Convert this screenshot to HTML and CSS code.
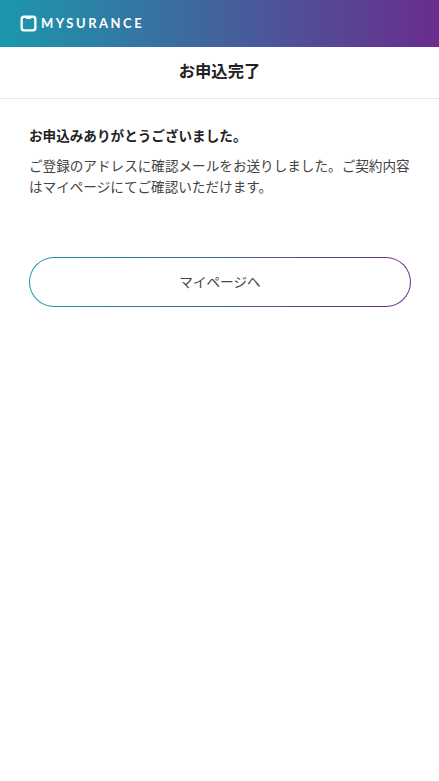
FILE: index.html
```html
<!DOCTYPE html>
<html lang="ja">
<head>
<meta charset="utf-8">
<title>お申込完了</title>
<link rel="stylesheet" href="styles.css">
</head>
<body>
<header class="topbar">
  <svg class="logo-mark" width="17" height="17" viewBox="0 0 17 17" aria-hidden="true">
    <path fill="#fff" fill-rule="evenodd" d="M4 0.5h9a3.5 3.5 0 0 1 3.5 3.5v9a3.500 3.500 0 0 1-3.500 3.500H4A3.500 3.500 0 0 1 0.500 13V4A3.500 3.500 0 0 1 4 0.500ZM4.500 2.800C3.500 2.800 2.800 3.500 2.800 4.500v8c0 1 .7 1.700 1.700 1.700h8c1 0 1.700-.7 1.700-1.700v-8c0-1-.7-1.700-1.700-1.700-.7 0-1 .3-1.400.6-.7.5-1.600.7-2.600.7s-1.900-.2-2.600-.7C5.500 3.100 5.200 2.800 4.500 2.800Z"/>
  </svg>
  <span class="logo-text">MYSURANCE</span>
</header>
<h1 class="page-title">お申込完了</h1>
<main class="content">
  <p class="lead">お申込みありがとうございました。</p>
  <p class="body-text">ご登録のアドレスに確認メールをお送りしました。ご契約内容はマイページにてご確認いただけます。</p>
  <a class="mypage-button" href="#">マイページへ</a>
</main>
</body>
</html>
```
FILE: styles.css
```css
* { box-sizing: border-box; }
html, body { margin: 0; padding: 0; background: #fff; }
body {
  font-family: "Noto Sans CJK JP", "Liberation Sans", sans-serif;
  color: #333;
}
.topbar {
  height: 47px;
  display: flex;
  align-items: center;
  gap: 4px;
  padding-left: 20px;
  background: linear-gradient(90deg, #1b98ac 0%, #6a2c8e 100%);
}
.logo-mark { flex: none; }
.logo-text {
  font-family: "Lato", "Liberation Sans", sans-serif;
  font-size: 13px;
  font-weight: 700;
  letter-spacing: 2.5px;
  color: #fff;
  line-height: 1;
}
.page-title {
  margin: 0;
  height: 52px;
  border-bottom: 1px solid #e6e6e6;
  font-size: 16.32px;
  font-weight: 700;
  line-height: 46px;
  text-align: center;
  color: #222;
}
.content { padding: 26px 29px 0; }
.lead {
  margin: 0;
  font-size: 13.6px;
  font-weight: 700;
  line-height: 20px;
  color: #222;
}
.body-text {
  margin: 10px 0 0;
  font-size: 13.6px;
  line-height: 21px;
  color: #444;
}
.mypage-button {
  display: flex;
  align-items: center;
  justify-content: center;
  margin-top: 60px;
  width: 382px;
  height: 50px;
  padding-bottom: 2px;
  border: 1.3px solid transparent;
  border-radius: 25px;
  background:
    linear-gradient(#fff, #fff) padding-box,
    linear-gradient(90deg, #1b98ac 0%, #6a2c8e 100%) border-box;
  font-size: 13.6px;
  color: #444;
  text-decoration: none;
}
```
